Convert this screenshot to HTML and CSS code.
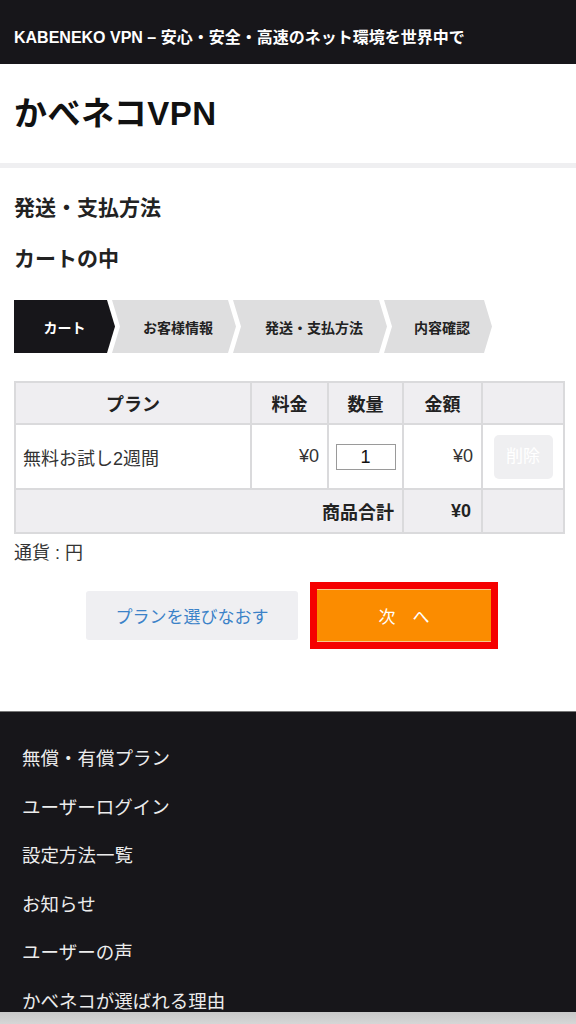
FILE: index.html
```html
<!DOCTYPE html>
<html lang="ja">
<head>
<meta charset="utf-8">
<title>かべネコVPN</title>
<link rel="stylesheet" href="styles.css">
</head>
<body>
<div class="topbar">KABENEKO VPN – 安心・安全・高速のネット環境を世界中で</div>
<header class="site-header">
  <h1 class="logo">かべネコVPN</h1>
</header>
<main class="main">
  <h2 class="page-title">発送・支払方法</h2>
  <h2 class="section-title">カートの中</h2>
  <ol class="steps">
    <li class="step step-cart active">カート</li>
    <li class="step step-customer">お客様情報</li>
    <li class="step step-shipping">発送・支払方法</li>
    <li class="step step-confirm">内容確認</li>
  </ol>
  <table class="cart">
    <colgroup>
      <col class="c-plan"><col class="c-price"><col class="c-qty"><col class="c-amount"><col class="c-del">
    </colgroup>
    <thead>
      <tr><th>プラン</th><th>料金</th><th>数量</th><th>金額</th><th></th></tr>
    </thead>
    <tbody>
      <tr class="item">
        <td class="name">無料お試し2週間</td>
        <td class="num">¥0</td>
        <td class="qty"><span class="qty-box">1</span></td>
        <td class="num">¥0</td>
        <td class="del"><span class="del-btn">削除</span></td>
      </tr>
      <tr class="total">
        <td colspan="3" class="total-label">商品合計</td>
        <td class="total-value">¥0</td>
        <td></td>
      </tr>
    </tbody>
  </table>
  <p class="currency">通貨 : 円</p>
  <div class="actions">
    <a class="btn btn-back">プランを選びなおす</a>
    <a class="btn btn-next">次　へ</a>
  </div>
</main>
<footer class="footer">
  <ul class="footer-nav">
    <li>無償・有償プラン</li>
    <li>ユーザーログイン</li>
    <li>設定方法一覧</li>
    <li>お知らせ</li>
    <li>ユーザーの声</li>
    <li>かべネコが選ばれる理由</li>
  </ul>
</footer>
<div class="browser-bar"></div>
</body>
</html>
```

FILE: styles.css
```css
* { box-sizing: border-box; }
html, body { margin: 0; padding: 0; }
body {
  font-family: "Liberation Sans", "Noto Sans CJK JP", sans-serif;
  color: #222;
  background: #fff;
  width: 576px;
  overflow: hidden;
}
.topbar {
  height: 64px;
  background: #17161a;
  color: #fff;
  font-size: 16px;
  font-weight: 700;
  display: flex;
  align-items: center;
  padding: 8px 14px 0;
  white-space: nowrap;
}
.site-header {
  height: 104px;
  border-bottom: 5px solid #efeff1;
  display: flex;
  align-items: center;
  padding: 0 14px;
}
.logo {
  margin: 0;
  font-size: 33px;
  font-weight: 700;
  color: #111;
  line-height: 1;
  letter-spacing: 0.5px;
}
.main { padding: 0 13px 0 14px; }
.page-title, .section-title {
  margin: 0;
  font-size: 21px;
  font-weight: 700;
  line-height: 30px;
  color: #222;
}
.page-title { padding-top: 25px; }
.section-title { padding-top: 21px; }
.steps {
  list-style: none;
  margin: 26px 0 0;
  padding: 0;
  display: flex;
  height: 53px;
}
.step {
  height: 53px;
  display: flex;
  align-items: center;
  justify-content: center;
  font-size: 14px;
  font-weight: 700;
  color: #222;
  background: #dededf;
  clip-path: polygon(0 0, calc(100% - 8px) 0, 100% 50%, calc(100% - 8px) 100%, 0 100%, 8px 50%);
  margin-left: -3px;
  padding-left: 8px;
}
.step.active {
  background: #17161a;
  color: #fff;
  margin-left: 0;
  padding-left: 0;
  clip-path: polygon(0 0, calc(100% - 8px) 0, 100% 50%, calc(100% - 8px) 100%, 0 100%);
}
.step-cart { width: 101px; }
.step-customer { width: 124px; }
.step-shipping { width: 154px; }
.step-confirm { width: 108px; }
.cart {
  margin-top: 28px;
  width: 549px;
  border-collapse: collapse;
  table-layout: fixed;
  font-size: 18px;
}
.c-plan { width: 236px; }
.c-price { width: 77px; }
.c-qty { width: 75px; }
.c-amount { width: 79px; }
.c-del { width: 82px; }
.cart th, .cart td {
  border: 2px solid #dadadc;
  padding: 0 8px;
}
.cart thead tr { height: 42px; }
.cart th {
  background: #efeef1;
  font-weight: 700;
  text-align: center;
  color: #222;
}
.item { height: 65px; }
.item td { color: #333; }
.name { text-align: left; padding-left: 7px !important; }
.num { text-align: right; }
.qty { text-align: center; padding: 0 !important; }
.qty-box {
  display: inline-block;
  width: 60px;
  height: 26px;
  line-height: 24px;
  border: 1px solid #9a9a9a;
  text-align: center;
  font-size: 18px;
  color: #111;
}
.del { padding: 0 !important; text-align: center; }
.del-btn {
  display: inline-block;
  width: 59px;
  height: 44px;
  line-height: 44px;
  border-radius: 5px;
  background: #efeff1;
  color: #fff;
  font-size: 17px;
}
.total { height: 44px; background: #efeef1; }
.total td { font-weight: 700; color: #222; }
.total-label { text-align: right; }
.total-value { text-align: right; padding-right: 10px !important; }
.currency {
  margin: 6px 0 0;
  font-size: 18px;
  line-height: 26px;
  color: #333;
}
.actions {
  display: flex;
  justify-content: center;
  align-items: center;
  gap: 19px;
  margin-top: 23px;
}
.btn {
  display: flex;
  align-items: center;
  justify-content: center;
  font-size: 17px;
  text-decoration: none;
}
.btn-back {
  width: 212px;
  height: 49px;
  background: #efeff2;
  color: #3b82c8;
  border-radius: 3px;
}
.btn-next {
  width: 174px;
  height: 53px;
  background: #fb8c00;
  color: #fff;
  border-top: 1px solid #f7c48a;
  border-bottom: 1px solid #f7c48a;
  outline: 7px solid #f50000;
  outline-offset: 0;
}
.footer {
  margin-top: 69px;
  background: #17161a;
  border-top: 1px solid #777;
  height: 320px;
}
.footer-nav {
  list-style: none;
  margin: 0;
  padding: 23px 22px 0;
}
.footer-nav li {
  color: #ececec;
  font-size: 18.5px;
  line-height: 48.5px;
  white-space: nowrap;
}
.browser-bar {
  position: fixed;
  left: 0;
  right: 0;
  bottom: 0;
  height: 12px;
  background: linear-gradient(#c8c8c8, #d6d6d6);
}
```
